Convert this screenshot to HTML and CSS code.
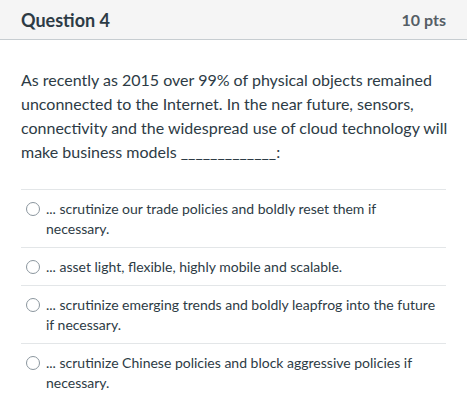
FILE: index.html
```html
<!DOCTYPE html>
<html>
<head>
<meta charset="utf-8">
<link rel="stylesheet" href="styles.css">
</head>
<body>
<div class="question">
  <div class="q-header">
    <span class="q-title">Question 4</span>
    <span class="q-points">10 pts</span>
  </div>
  <div class="q-body">
    <p class="q-text">As recently as 2015 over 99% of physical objects remained unconnected to the Internet. In the near future, sensors, connectivity and the widespread use of cloud technology will make business models _____________:</p>
    <div class="answers">
      <label class="answer"><span class="radio"></span><span class="answer-text">... scrutinize our trade policies and boldly reset them if necessary.</span></label>
      <label class="answer"><span class="radio"></span><span class="answer-text">... asset light, flexible, highly mobile and scalable.</span></label>
      <label class="answer"><span class="radio"></span><span class="answer-text">... scrutinize emerging trends and boldly leapfrog into the future if necessary.</span></label>
      <label class="answer"><span class="radio"></span><span class="answer-text">... scrutinize Chinese policies and block aggressive policies if necessary.</span></label>
    </div>
  </div>
</div>
</body>
</html>
```

FILE: styles.css
```css
html, body {
  margin: 0;
  padding: 0;
  background: #ffffff;
}
body {
  font-family: Lato, "Noto Sans", sans-serif;
  color: #2d3b45;
}
.question {
  width: 467px;
}
.q-header {
  display: flex;
  justify-content: space-between;
  align-items: center;
  height: 39px;
  padding: 0 21px;
  background: #f5f5f5;
  border-bottom: 1px solid #c7cdd1;
}
.q-title {
  font-size: 18px;
  font-weight: 700;
  color: #2d3b45;
}
.q-points {
  font-size: 16px;
  font-weight: 700;
  color: #555e66;
}
.q-body {
  padding: 28px 21px 0 21px;
}
.q-text {
  margin: 0 -8px 0 0;
  font-size: 16px;
  line-height: 24px;
}
.answers {
  margin-top: 25px;
}
.answer {
  display: flex;
  align-items: flex-start;
  border-top: 1px solid #e3e6e8;
  padding: 9px 0 8px 0;
  font-size: 14px;
  line-height: 20px;
}
.radio {
  flex: none;
  width: 12px;
  height: 12px;
  border: 1px solid #8b969e;
  border-radius: 50%;
  margin: 3px 6px 0 5px;
  background: #fff;
}
.answer-text {
  flex: 1;
  padding-right: 8px;
}
```
